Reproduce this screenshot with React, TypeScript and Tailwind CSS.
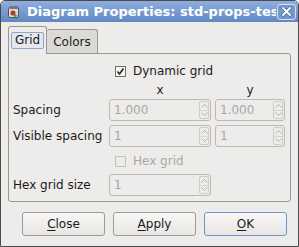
import React from "react";

const font = "font-['DejaVu_Sans','Liberation_Sans',sans-serif]";

function Spin({ value, w }: { value: string; w: string }) {
  return (
    <div className={`flex h-[22px] ${w} rounded-[3px] border border-[#bcbab6] bg-[#edeceb] p-[1px]`}>
      <div className="flex-1 pl-[3px] text-[12px] leading-[18px] text-[#a9a7a3]">{value}</div>
      <div className="flex w-[10px] flex-col rounded-[2px] border border-[#cfcdc9]">
        <div className="flex flex-1 items-center justify-center border-b border-[#d8d6d2]">
          <svg width="7" height="4" viewBox="0 0 7 4">
            <path d="M0.5 3.5 L3.5 0.5 L6.5 3.5" fill="none" stroke="#b5b3af" strokeWidth="1" />
          </svg>
        </div>
        <div className="flex flex-1 items-center justify-center">
          <svg width="7" height="4" viewBox="0 0 7 4">
            <path d="M0.5 0.5 L3.5 3.5 L6.5 0.5" fill="none" stroke="#b5b3af" strokeWidth="1" />
          </svg>
        </div>
      </div>
    </div>
  );
}

function Check({ on, disabled, label }: { on?: boolean; disabled?: boolean; label: string }) {
  return (
    <div className="flex h-[14px] items-center pl-[102px]">
      <div
        className={`flex h-[11px] w-[11px] items-center justify-center border ${
          disabled ? "border-[#c4c2be] bg-[#edeceb]" : "border-[#6f6e6b] bg-[#f7f7f6]"
        }`}
      >
        {on && (
          <svg width="9" height="9" viewBox="0 0 9 9">
            <path d="M1.5 4.5 L3.5 7 L7.5 1.5" fill="none" stroke="#222" strokeWidth="1.6" />
          </svg>
        )}
      </div>
      <span className={`ml-[7px] text-[12px] ${disabled ? "text-[#aaa8a5]" : "text-[#1a1a1a]"}`}>{label}</span>
    </div>
  );
}

function Btn({ children, def }: { children: React.ReactNode; def?: boolean }) {
  return (
    <div
      className={`flex h-[24px] w-[83px] items-center justify-center rounded-[3px] border bg-gradient-to-b from-[#f8f7f6] to-[#e7e6e4] text-[12px] text-[#1a1a1a] ${
        def ? "border-[#6e94c8]" : "border-[#9d9b97]"
      }`}
    >
      {children}
    </div>
  );
}

export default function App() {
  return (
    <div className={`flex h-[247px] w-[299px] flex-col overflow-hidden rounded-t-[5px] border border-[#4a4a4a] bg-[#edeceb] ${font}`}>
      <div className="flex h-[21px] items-center bg-gradient-to-b from-[#8eaede] to-[#6188c2] pl-[6px] pr-[2px]">
        <svg width="14" height="14" viewBox="0 0 14 14" className="shrink-0">
          <rect x="1.5" y="2.5" width="10" height="10" rx="1.5" fill="#d9d9d9" stroke="#555" />
          <rect x="3" y="1" width="8" height="3" fill="#777" />
          <circle cx="6" cy="8" r="2.5" fill="#c43030" />
          <path d="M7 9 L11 11 L7 12 Z" fill="#3a9a3a" />
        </svg>
        <div className="ml-[6px] flex-1 overflow-hidden whitespace-nowrap text-[13px] font-bold leading-[21px] text-white">
          Diagram Properties: std-props-test
        </div>
        <div className="ml-[1px] flex h-[16px] w-[19px] shrink-0 items-center justify-center rounded-[3px] border border-[#d5e0f0] bg-[#7598cb]">
          <svg width="11" height="11" viewBox="0 0 11 11">
            <path d="M2 2 L9 9 M9 2 L2 9" stroke="#4f6f9f" strokeWidth="3.4" strokeLinecap="round" />
            <path d="M2 2 L9 9 M9 2 L2 9" stroke="#fff" strokeWidth="1.8" strokeLinecap="round" />
          </svg>
        </div>
      </div>

      <div className="flex flex-col px-[7px] pt-[4px]">
        <div className="flex h-[27px] items-end">
          <div className="relative z-10 -mb-[1px] flex h-[28px] w-[39px] items-center justify-center rounded-t-[3px] border border-b-0 border-[#9a9894] bg-[#edeceb]">
            <div className="rounded-[2px] border border-[#8ca7cc] bg-[#e4e8ee] px-[3px] text-[12px] leading-[15px] text-[#1a1a1a]">
              Grid
            </div>
          </div>
          <div className="flex h-[24px] w-[51px] items-center justify-center rounded-t-[3px] border border-l-0 border-b-0 border-[#9a9894] bg-[#dcdad6] text-[12px] text-[#1a1a1a]">
            Colors
          </div>
        </div>
        <div className="flex h-[149px] flex-col rounded-b-[3px] rounded-tr-[3px] border border-[#9a9894] bg-[#edeceb] pl-[4px] pr-[5px]">
          <div className="mt-[10px]">
            <Check on label="Dynamic grid" />
          </div>
          <div className="mt-[4px] flex h-[16px] items-center text-[12px] text-[#1a1a1a]">
            <div className="w-[96px]" />
            <div className="w-[102px] text-center">x</div>
            <div className="ml-[4px] w-[70px] text-center">y</div>
          </div>
          <div className="mt-[1px] flex items-center text-[12px] text-[#1a1a1a]">
            <div className="w-[96px]">Spacing</div>
            <Spin value="1.000" w="w-[102px]" />
            <div className="ml-[4px]">
              <Spin value="1.000" w="w-[70px]" />
            </div>
          </div>
          <div className="mt-[4px] flex items-center text-[12px] text-[#1a1a1a]">
            <div className="w-[96px]">Visible spacing</div>
            <Spin value="1" w="w-[102px]" />
            <div className="ml-[4px]">
              <Spin value="1" w="w-[70px]" />
            </div>
          </div>
          <div className="mt-[7px]">
            <Check disabled label="Hex grid" />
          </div>
          <div className="mt-[6px] flex items-center text-[12px] text-[#1a1a1a]">
            <div className="w-[96px]">Hex grid size</div>
            <Spin value="1" w="w-[102px]" />
          </div>
        </div>
      </div>

      <div className="mt-[10px] flex gap-[8px] pl-[21px]">
        <Btn>
          <span className="underline underline-offset-2">C</span>lose
        </Btn>
        <Btn>
          <span className="underline underline-offset-2">A</span>pply
        </Btn>
        <Btn def>
          <span className="underline underline-offset-2">O</span>K
        </Btn>
      </div>
    </div>
  );
}
